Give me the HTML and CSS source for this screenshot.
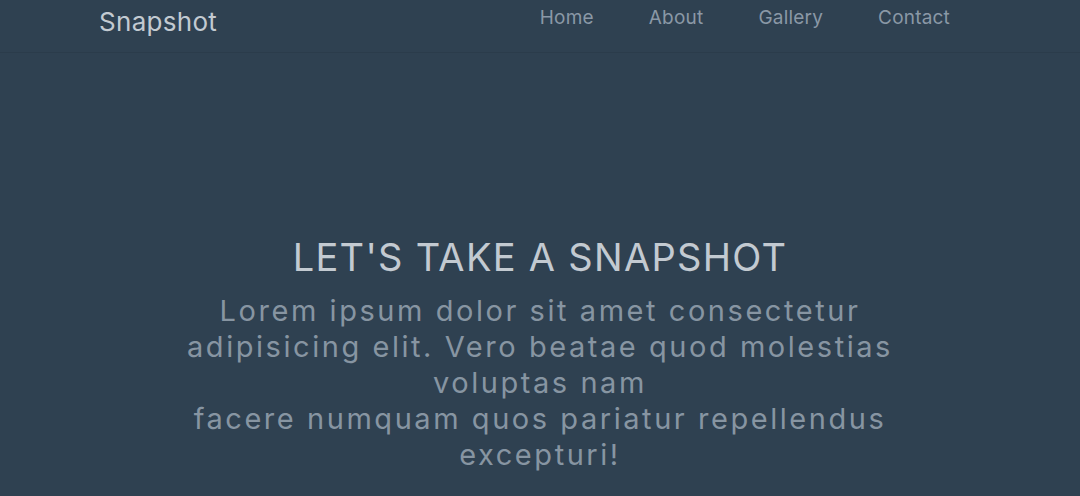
FILE: index.html
```html
<!DOCTYPE html>
<html lang="en">
<head>
<meta charset="utf-8">
<title>Snapshot</title>
<link rel="stylesheet" href="styles.css">
</head>
<body>
<header class="navbar">
  <div class="nav-inner">
    <a class="brand" href="#">Snapshot</a>
    <nav class="nav-links">
      <a href="#">Home</a>
      <a href="#">About</a>
      <a href="#">Gallery</a>
      <a href="#">Contact</a>
    </nav>
  </div>
</header>
<section class="hero">
  <h1 class="hero-title">LET'S TAKE A SNAPSHOT</h1>
  <p class="hero-text">Lorem ipsum dolor sit amet consectetur adipisicing elit. Vero beatae quod molestias voluptas nam<br>facere numquam quos pariatur repellendus excepturi!</p>
</section>
</body>
</html>
```
FILE: styles.css
```css
* { box-sizing: border-box; }
html, body { margin: 0; padding: 0; }
body {
  background: #2f4151;
  font-family: Inter, Roboto, "Noto Sans", sans-serif;
  overflow: hidden;
}
.navbar {
  height: 53px;
  border-bottom: 1px solid #2b3c4b;
}
.nav-inner {
  display: flex;
  align-items: flex-start;
  justify-content: space-between;
  padding: 0 130px 0 99px;
}
.brand {
  color: #c3cad1;
  font-size: 26px;
  letter-spacing: 0.3px;
  text-decoration: none;
  line-height: 43px;
}
.nav-links {
  display: flex;
  gap: 55px;
}
.nav-links a {
  color: #8a98a6;
  text-decoration: none;
  font-size: 19px;
  letter-spacing: 0.2px;
  line-height: 36px;
}
.hero {
  display: flex;
  flex-direction: column;
  align-items: center;
  padding-top: 181px;
  text-align: center;
}
.hero-title {
  margin: 0;
  color: #c3cad1;
  font-weight: 400;
  font-size: 38px;
  letter-spacing: 1.3px;
  line-height: 46px;
}
.hero-text {
  margin: 13px 0 0;
  max-width: 740px;
  color: #8795a2;
  font-size: 29px;
  letter-spacing: 2.55px;
  line-height: 36px;
}
```
